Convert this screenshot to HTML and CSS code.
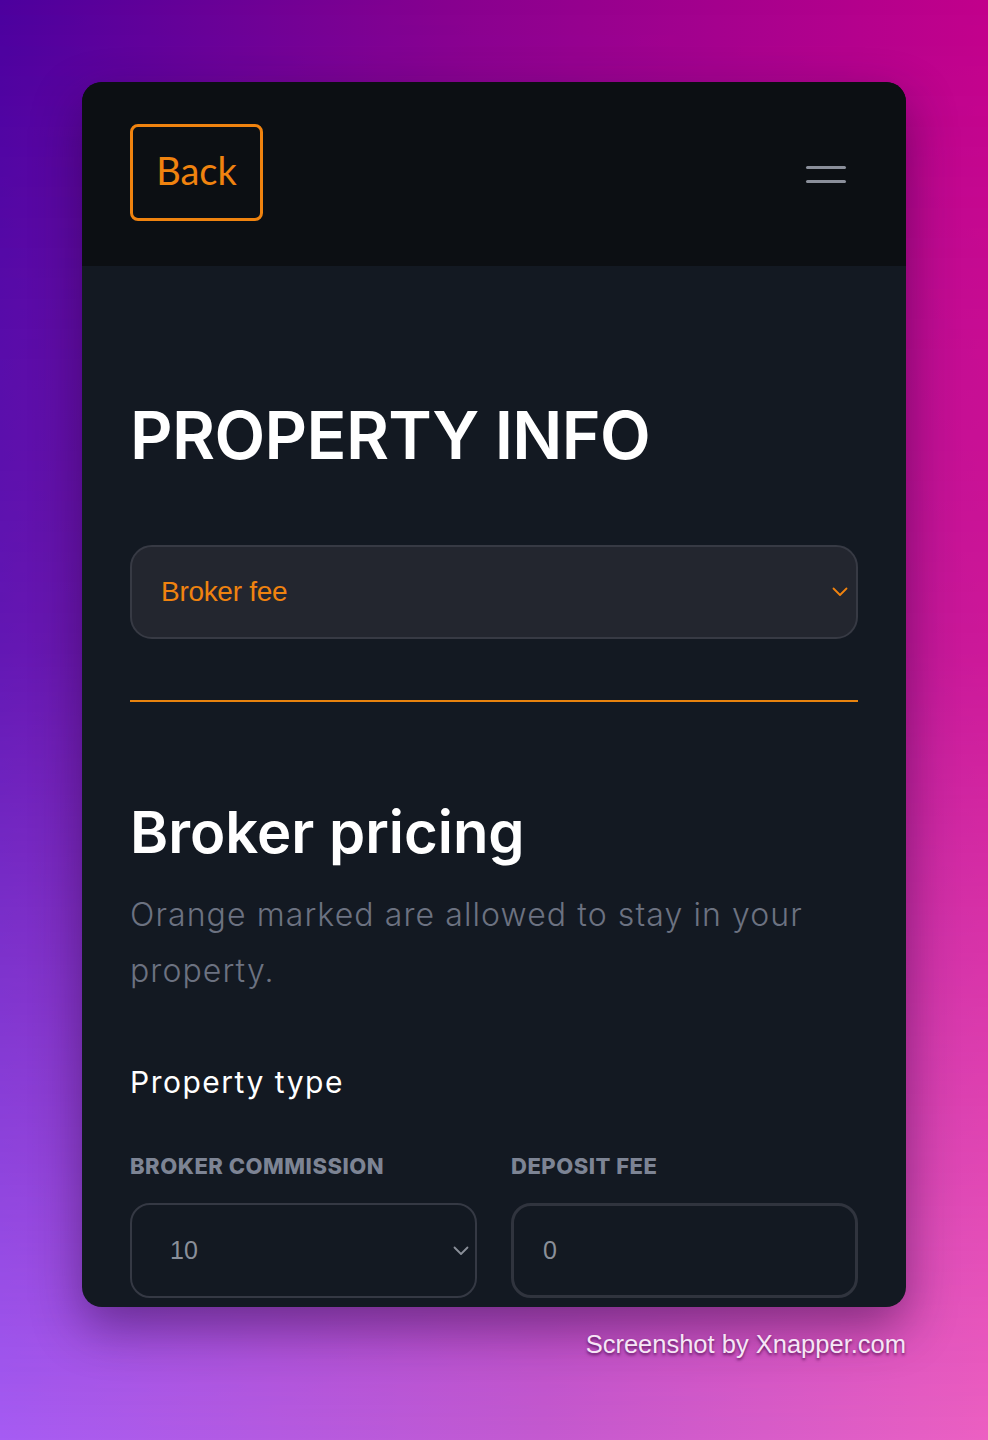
FILE: index.html
```html
<!DOCTYPE html>
<html lang="en">
<head>
<meta charset="utf-8">
<title>Property info</title>
<link rel="stylesheet" href="styles.css">
</head>
<body>
<div class="page">
  <div class="card">
    <header class="header">
      <button class="back">Back</button>
      <div class="burger"><span></span><span></span></div>
    </header>
    <main class="content">
      <h1 class="title">PROPERTY INFO</h1>
      <div class="select select-main">
        <span>Broker fee</span>
        <svg class="chev" width="16" height="10" viewBox="0 0 16 10"><polyline points="1.5,1.5 8,8 14.5,1.5" fill="none" stroke="#f0830f" stroke-width="1.8" stroke-linecap="round" stroke-linejoin="round"/></svg>
      </div>
      <hr class="divider">
      <h2 class="subtitle">Broker pricing</h2>
      <p class="desc">Orange marked are allowed to stay in your property.</p>
      <h3 class="section">Property type</h3>
      <div class="fields">
        <div class="field">
          <div class="label">BROKER COMMISSION</div>
          <div class="select select-small">
            <span>10</span>
            <svg class="chev" width="16" height="10" viewBox="0 0 16 10"><polyline points="1.5,1.5 8,8 14.5,1.5" fill="none" stroke="#8a8f99" stroke-width="1.8" stroke-linecap="round" stroke-linejoin="round"/></svg>
          </div>
        </div>
        <div class="field">
          <div class="label">DEPOSIT FEE</div>
          <div class="input">0</div>
        </div>
      </div>
    </main>
  </div>
  <div class="watermark">Screenshot by Xnapper.com</div>
</div>
</body>
</html>
```

FILE: styles.css
```css
* { box-sizing: border-box; }
html, body { margin: 0; padding: 0; }
body {
  width: 988px;
  height: 1440px;
  overflow: hidden;
  position: relative;
  background: linear-gradient(to right, #a65cf3 0%, #c45ad0 55%, #ec60c2 100%);
  font-family: "Inter", "Liberation Sans", sans-serif;
}
body::before {
  content: "";
  position: absolute;
  inset: 0;
  background: linear-gradient(to right, #4c009e 0%, #86008f 45%, #c2008b 100%);
  -webkit-mask-image: linear-gradient(to bottom, #000 0%, rgba(0,0,0,0.75) 45%, rgba(0,0,0,0) 100%);
  mask-image: linear-gradient(to bottom, #000 0%, rgba(0,0,0,0.75) 45%, rgba(0,0,0,0) 100%);
}
.page {
  position: relative;
  padding: 82px 82px 0;
}
.card {
  width: 824px;
  height: 1225px;
  border-radius: 20px;
  overflow: hidden;
  background: #131922;
  box-shadow: 0 20px 50px rgba(30, 0, 50, 0.45);
}
.header {
  height: 184px;
  background: #0c0f13;
  display: flex;
  align-items: center;
  justify-content: space-between;
  padding: 0 60px 0 48px;
}
.back {
  width: 133px;
  height: 97px;
  margin-top: -3px;
  border: 3px solid #f0830f;
  border-radius: 8px;
  background: transparent;
  color: #f0830f;
  font-family: "Lato", sans-serif;
  font-weight: 400;
  font-size: 38px;
  padding: 0 0 6px;
}
.burger {
  display: flex;
  flex-direction: column;
  gap: 11px;
  width: 40px;
}
.burger span {
  display: block;
  height: 3px;
  border-radius: 2px;
  background: #8b8f9a;
}
.content {
  padding: 129px 48px 0;
}
.title {
  margin: 0;
  font-family: "Inter", sans-serif;
  font-weight: 600;
  font-size: 66px;
  line-height: 80px;
  color: #ffffff;
  letter-spacing: -0.6px;
}
.select {
  display: flex;
  align-items: center;
  justify-content: space-between;
  font-family: "Liberation Sans", Arial, sans-serif;
}
.select-main {
  margin-top: 70px;
  height: 94px;
  background: #23262f;
  border: 2px solid #373a44;
  border-radius: 22px;
  padding: 0 8px 0 29px;
  color: #f0830f;
  font-size: 28px;
  letter-spacing: -0.3px;
}
.divider {
  margin: 61px 0 0;
  border: 0;
  height: 2px;
  background: #e8830f;
}
.subtitle {
  margin: 95px 0 0;
  font-family: "Inter", sans-serif;
  font-weight: 600;
  font-size: 58px;
  line-height: 70px;
  color: #ffffff;
  letter-spacing: 0;
}
.desc {
  margin: 20px 0 0;
  font-family: "Inter", sans-serif;
  font-weight: 300;
  font-size: 32px;
  line-height: 56px;
  color: #6c7281;
  letter-spacing: 1.1px;
}
.section {
  margin: 63px 0 0;
  font-family: "Inter", sans-serif;
  font-weight: 400;
  font-size: 30px;
  line-height: 40px;
  color: #ffffff;
  letter-spacing: 1.5px;
}
.fields {
  margin-top: 50px;
  display: grid;
  grid-template-columns: 347px 347px;
  column-gap: 34px;
}
.label {
  font-family: "Inter", sans-serif;
  font-weight: 800;
  font-size: 22px;
  line-height: 28px;
  color: #7d8494;
  letter-spacing: 0.5px;
}
.select-small {
  margin-top: 23px;
  height: 95px;
  border: 2px solid #353944;
  border-radius: 20px;
  padding: 0 6px 0 38px;
  color: #8a8f99;
  font-size: 25px;
}
.input {
  margin-top: 23px;
  height: 95px;
  border: 3px solid #30343e;
  border-radius: 20px;
  padding: 0 29px;
  display: flex;
  align-items: center;
  color: #8a8f99;
  font-family: "Liberation Sans", Arial, sans-serif;
  font-size: 25px;
}
.watermark {
  margin-top: 23px;
  text-align: right;
  font-family: "Liberation Sans", Arial, sans-serif;
  font-size: 25.5px;
  color: #f6e6f6;
  text-shadow: 0 2px 3px rgba(60, 0, 60, 0.7);
}
```
